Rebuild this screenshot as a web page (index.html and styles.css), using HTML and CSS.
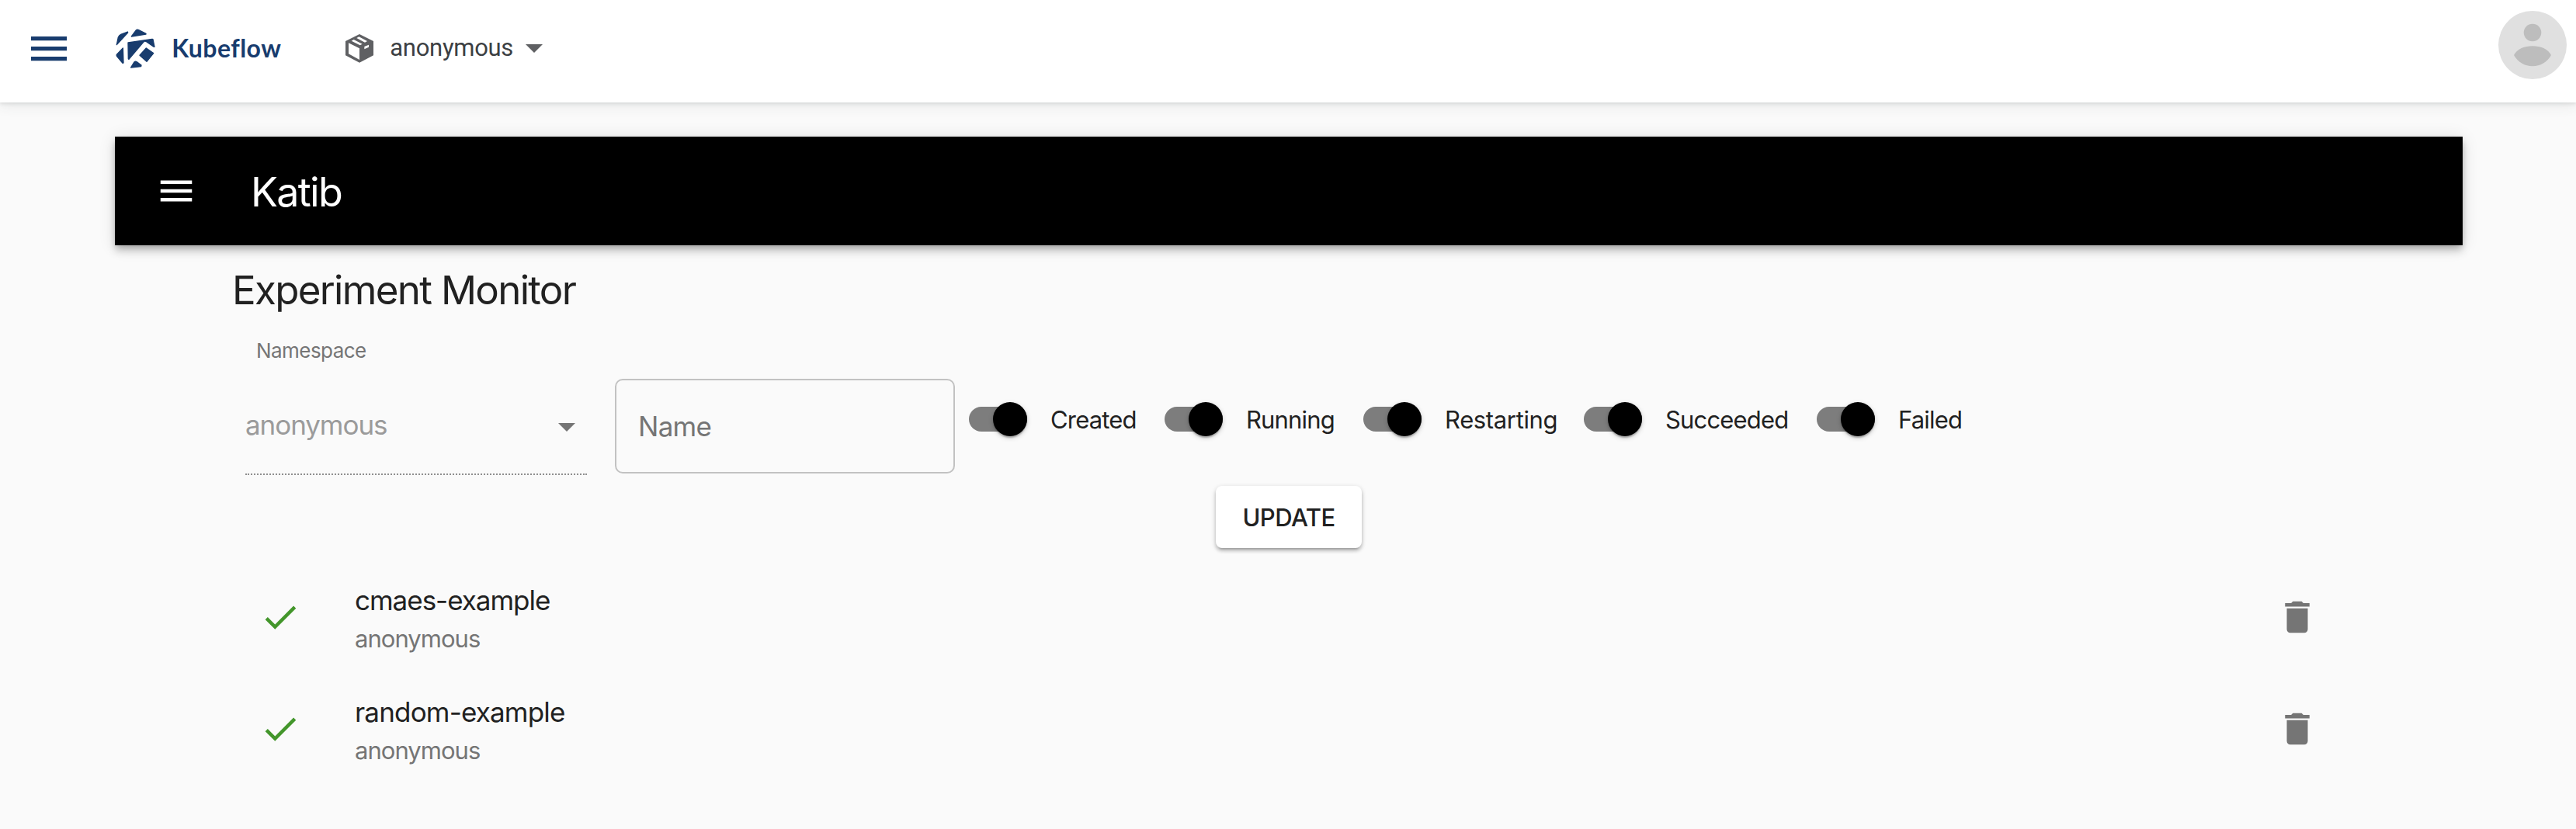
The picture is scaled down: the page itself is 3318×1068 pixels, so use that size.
FILE: index.html
```html
<!DOCTYPE html>
<html lang="en">
<head>
<meta charset="utf-8">
<title>Kubeflow - Katib</title>
<link rel="stylesheet" href="styles.css">
</head>
<body>
<header class="topbar">
  <svg class="topbar-menu" viewBox="0 0 46 32"><path d="M0 0h46v5.3H0zM0 13h46v5.3H0zM0 26h46v5.3H0z"/></svg>
  <div class="brand">
    <svg class="brand-logo" viewBox="447 110 154 154">
      <g stroke-linejoin="round">
        <path d="M451 172l6-29q3-7 10-11l26-10 1 3z"/>
        <path d="M508 140l18-24q4-4 10-1l28 14v2z"/>
        <path d="M495 164l93-14 3 1 6 29-4-1-27-19q-7-4-12 2l-56 66-2-1z"/>
        <path d="M475 185l2 57-3 1-22-26q-3-4 0-8z"/>
        <path d="M540 213l25-28 28 20-26 32z"/>
        <path d="M506 260l13-21q4-4 9-1l18 13-1 5z"/>
      </g>
    </svg>
    <span class="brand-name">Kubeflow</span>
  </div>
  <div class="ns-picker">
    <svg class="ns-icon" viewBox="0 0 108 111">
      <path fill-rule="evenodd" d="M54 0L108 27V82L54 110L0 82V27ZM12 34V76L54 99V55ZM23 26L56 43L65 38L32 21ZM43 15L75 32L84 27L52 10ZM73 48V58L90 50V41Z"/>
    </svg>
    <span class="ns-name">anonymous</span>
    <svg class="caret" viewBox="0 0 22 11"><path d="M0 0h22L11 11z"/></svg>
  </div>
  <svg class="avatar" viewBox="0 0 88 88">
    <circle class="avatar-bg" cx="44" cy="44" r="44"/>
    <circle cx="44" cy="28" r="11.3"/>
    <path d="M20 57C24 49 34 45.300 44 45.300S64 49 68 57C63 66 54 71.300 44 71.300S25 66 20 57z"/>
  </svg>
</header>

<main class="page">
  <div class="appbar">
    <svg class="appbar-menu" viewBox="0 0 24 24"><path d="M3 18h18v-2H3v2zm0-5h18v-2H3v2zm0-7v2h18V6H3z"/></svg>
    <span class="appbar-title">Katib</span>
  </div>

  <section class="monitor">
    <h1 class="monitor-title">Experiment Monitor</h1>

    <div class="filters">
      <div class="select-field">
        <label class="select-label">Namespace</label>
        <div class="select-control">
          <span class="select-value">anonymous</span>
          <svg class="caret" viewBox="0 0 22 11"><path d="M0 0h22L11 11z"/></svg>
        </div>
      </div>
      <div class="name-field">Name</div>
      <div class="switches">
        <div class="switch"><span class="track"><span class="thumb"></span></span><span>Created</span></div>
        <div class="switch"><span class="track"><span class="thumb"></span></span><span>Running</span></div>
        <div class="switch switch-wide"><span class="track"><span class="thumb"></span></span><span>Restarting</span></div>
        <div class="switch"><span class="track"><span class="thumb"></span></span><span>Succeeded</span></div>
        <div class="switch"><span class="track"><span class="thumb"></span></span><span>Failed</span></div>
      </div>
    </div>

    <button class="update">UPDATE</button>

    <ul class="experiments">
      <li class="experiment">
        <svg class="icon icon-done" viewBox="0 0 24 24"><path d="M9 16.200L4.800 12l-1.400 1.400L9 19 21 7l-1.400-1.400L9 16.200z"/></svg>
        <div class="experiment-text">
          <span class="experiment-name">cmaes-example</span>
          <span class="experiment-ns">anonymous</span>
        </div>
        <svg class="icon icon-delete" viewBox="0 0 24 24"><path d="M6 19c0 1.100.9 2 2 2h8c1.100 0 2-.9 2-2V7H6v12zM19 4h-3.500l-1-1h-5l-1 1H5v2h14V4z"/></svg>
      </li>
      <li class="experiment">
        <svg class="icon icon-done" viewBox="0 0 24 24"><path d="M9 16.200L4.800 12l-1.400 1.400L9 19 21 7l-1.400-1.400L9 16.200z"/></svg>
        <div class="experiment-text">
          <span class="experiment-name experiment-name-long">random-example</span>
          <span class="experiment-ns">anonymous</span>
        </div>
        <svg class="icon icon-delete" viewBox="0 0 24 24"><path d="M6 19c0 1.100.9 2 2 2h8c1.100 0 2-.9 2-2V7H6v12zM19 4h-3.500l-1-1h-5l-1 1H5v2h14V4z"/></svg>
      </li>
    </ul>
  </section>
</main>
</body>
</html>
```
FILE: styles.css
```css
* { box-sizing: border-box; }

body {
  margin: 0;
  min-height: 1068px;
  background: #fafafa;
  color: #212121;
  font-family: Inter, "Liberation Sans", sans-serif;
}

svg { display: block; flex: none; }

/* Dashboard header */
.topbar {
  display: flex;
  align-items: center;
  height: 132px;
  padding: 0 12px 7px 40px;
  background: #fff;
  box-shadow: 0 2px 4px rgba(60, 64, 67, .12), 0 4px 16px rgba(60, 64, 67, .1);
}
.topbar-menu { width: 46px; height: 32px; fill: #183c6e; }
.brand { display: flex; align-items: center; margin-left: 63px; color: #183c6e; }
.brand-logo { width: 51.300px; height: 51.300px; fill: #183c6e; stroke: #183c6e; stroke-width: 4px; }
.brand-name {
  width: 162px;
  margin-left: 21px;
  font: 700 32px/40px Lato, sans-serif;
  letter-spacing: .45px;
}
.ns-picker { display: flex; align-items: center; margin-left: 62px; fill: #5f6063; }
.ns-icon { width: 36px; height: 37px; }
.ns-name {
  width: 175px;
  margin: -2px 0 0 21px;
  color: #3c4043;
  font: 400 31px/40px Roboto, sans-serif;
  letter-spacing: -.3px;
}
.caret { width: 22px; height: 11px; }
.avatar { width: 88px; height: 88px; margin: -9px 0 0 auto; fill: #bdbdbd; }
.avatar-bg { fill: #e0e0e0; }

/* Katib app bar */
.page { padding: 44px 146px 0 148px; }
.appbar {
  display: flex;
  align-items: center;
  height: 140px;
  padding-left: 52px;
  background: #000;
  color: #fff;
  box-shadow: 0 4px 8px -2px rgba(0, 0, 0, .2), 0 8px 10px rgba(0, 0, 0, .14), 0 2px 20px rgba(0, 0, 0, .12);
}
.appbar-menu { width: 54px; height: 54px; fill: #fff; }
.appbar-title {
  margin: 4px 0 0 69px;
  font-size: 52px;
  line-height: 72px;
  letter-spacing: -1.690px;
}

/* Experiment monitor */
.monitor { display: flex; flex-direction: column; padding: 20px 151px 0; }
.monitor-title {
  margin: 0;
  font-size: 51px;
  font-weight: 400;
  line-height: 75px;
  letter-spacing: -1.680px;
}
.filters { display: flex; height: 201px; padding-left: 17px; }
.select-field { width: 440px; }
.select-label {
  display: block;
  height: 77px;
  padding: 21px 0 0 14px;
  color: #757575;
  font-size: 26px;
  line-height: 40px;
  letter-spacing: -.56px;
}
.select-control {
  display: flex;
  align-items: center;
  justify-content: space-between;
  height: 124px;
  padding: 0 15px 5px 0;
  border-bottom: 2px dotted #8f8f8f;
  fill: #757575;
}
.select-value { color: #9b9b9b; font-size: 35px; letter-spacing: -1.060px; }
.select-control .caret { margin-top: 7px; }
.name-field {
  width: 438px;
  height: 122px;
  margin: 77px 0 0 36px;
  padding: 0 28px;
  border: 2px solid #c2c2c2;
  border-radius: 10px;
  color: #757575;
  font-size: 35px;
  line-height: 118px;
  letter-spacing: -.73px;
}
.switches {
  display: grid;
  grid-template-columns: 252px 256px 284px 300px auto;
  height: 44px;
  margin: 107px 0 0 18px;
  font-size: 31px;
  line-height: 46px;
  letter-spacing: -.83px;
}
.switch { display: flex; align-items: flex-start; gap: 30.5px; }
.switch-wide { letter-spacing: -.36px; }
.track {
  display: flex;
  align-items: center;
  justify-content: flex-end;
  width: 74.5px;
  height: 32px;
  margin-top: 6px;
  border-radius: 16px;
  background: #7d7d7d;
}
.thumb {
  width: 44px;
  height: 44px;
  flex: none;
  border-radius: 50%;
  background: #000;
  box-shadow: 0 2px 6px rgba(0, 0, 0, .2), 0 2px 2px rgba(0, 0, 0, .14), 0 4px 2px -2px rgba(0, 0, 0, .12);
}
.update {
  align-self: center;
  width: 188px;
  height: 80px;
  margin-top: 14px;
  padding: 2px 0 0;
  border: 0;
  border-radius: 8px;
  background: #fff;
  color: #212121;
  font: 500 31px/60px Inter, sans-serif;
  letter-spacing: -.52px;
  box-shadow: 0 2px 6px rgba(0, 0, 0, .2), 0 4px 4px rgba(0, 0, 0, .14), 0 6px 2px -4px rgba(0, 0, 0, .12);
}
.experiments { margin: 17px 0 0; padding: 0; list-style: none; }
.experiment { display: flex; align-items: center; height: 144px; padding: 0 35px; }
.icon { width: 54px; height: 54px; }
.icon-done { fill: #43962b; }
.icon-delete { fill: #757575; }
.experiment-text {
  display: flex;
  flex: 1;
  flex-direction: column;
  padding: 6px 0 0 69px;
  line-height: 49px;
}
.experiment-name { font-size: 35px; letter-spacing: -1.020px; }
.experiment-name-long { letter-spacing: -.82px; }
.experiment-ns { color: #757575; font-size: 31px; letter-spacing: -.96px; }
```
